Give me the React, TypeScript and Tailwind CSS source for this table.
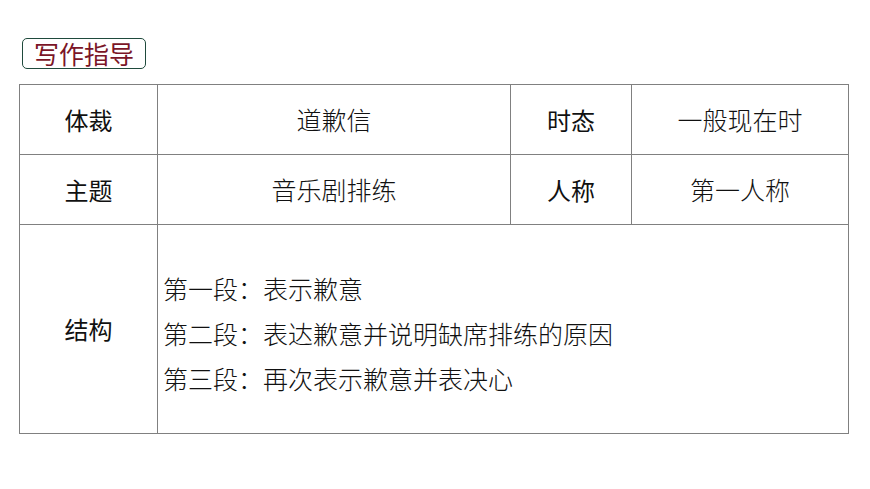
const rows = [
  { a: '体裁', b: '道歉信', c: '时态', d: '一般现在时' },
  { a: '主题', b: '音乐剧排练', c: '人称', d: '第一人称' },
];

const steps = [
  '第一段：表示歉意',
  '第二段：表达歉意并说明缺席排练的原因',
  '第三段：再次表示歉意并表决心',
];

const font = { fontFamily: '"Noto Sans CJK SC", "Noto Sans", sans-serif' };

export default function App() {
  return (
    <div className="h-[489px] w-[870px] bg-white" style={font}>
      <div className="pl-[22px] pt-[38px]">
        <div className="flex h-[31px] w-[124px] items-center justify-center rounded-[5px] border border-[#1f4a3c] text-[25px] leading-none text-[#7b1527]">
          写作指导
        </div>
      </div>
      <table className="ml-[19px] mt-[15px] border-collapse text-[25px]">
        <tbody>
          {rows.map((r) => (
            <tr key={r.a} className="h-[70px]">
              <td className="w-[138px] border border-[#808080] text-center text-[24px] text-[#111]">{r.a}</td>
              <td className="w-[353px] border border-[#808080] text-center font-light text-[#111]">{r.b}</td>
              <td className="w-[121px] border border-[#808080] text-center text-[24px] text-[#111]">{r.c}</td>
              <td className="w-[217px] border border-[#808080] text-center font-light text-[#111]">{r.d}</td>
            </tr>
          ))}
          <tr className="h-[209px]">
            <td className="border border-[#808080] text-center text-[24px] text-[#111]">结构</td>
            <td colSpan={3} className="border border-[#808080] pl-[5px] pt-[8px] align-middle">
              <div className="flex flex-col font-light text-[#111]">
                {steps.map((s) => (
                  <div key={s} className="leading-[45px]">
                    {s}
                  </div>
                ))}
              </div>
            </td>
          </tr>
        </tbody>
      </table>
    </div>
  );
}
